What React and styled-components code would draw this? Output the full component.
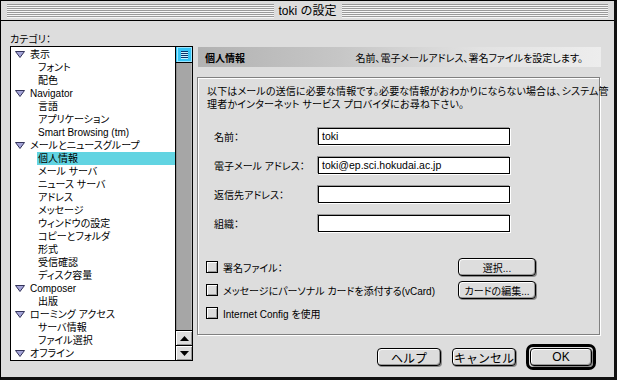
import React from "react";
import styled, { createGlobalStyle } from "styled-components";

const GlobalStyle = createGlobalStyle`
  html, body { margin: 0; padding: 0; background: #444; }
  body {
    font-family: "Liberation Sans", "Noto Sans CJK JP", sans-serif;
    font-size: 10px;
    font-feature-settings: "palt";
    color: #000;
  }
  * { box-sizing: border-box; }
`;

const Window = styled.div`
  width: 617px;
  height: 380px;
  background: #dddddd;
  border-top: 1px solid #000;
  border-left: 1px solid #000;
  border-right: 3px solid #111;
  border-bottom: 3px solid #111;
  display: flex;
  flex-direction: column;
  overflow: hidden;
`;

const TitleBar = styled.div`
  height: 20px;
  flex: none;
  border-bottom: 1px solid #000;
  display: flex;
  align-items: center;
  padding: 0 6px;
  background: #dcdcdc;
`;

const Stripes = styled.div`
  flex: 1;
  height: 14px;
  background: repeating-linear-gradient(to bottom, #9a9a9a 0 1px, #f6f6f6 1px 2px);
`;

const Title = styled.div`
  padding: 0 5px;
  font-size: 12px;
  line-height: 14px;
  font-feature-settings: normal;
`;

const Body = styled.div`
  display: flex;
  padding-left: 9px;
`;

const Side = styled.div`
  width: 183px;
  margin-top: 12px;
  display: flex;
  flex-direction: column;
`;

const SideLabel = styled.div`
  height: 13px;
  line-height: 13px;
`;

const List = styled.div`
  height: 315px;
  border: 1px solid #000;
  background: #fff;
  display: flex;
`;

const Rows = styled.div`
  flex: 1;
  padding-top: 1px;
  overflow: hidden;
`;

const Row = styled.div`
  height: 13px;
  display: flex;
  align-items: center;
  padding-left: ${(p) => (p.$child ? 26 : 4)}px;
  white-space: nowrap;
`;

const RowText = styled.span`
  flex: ${(p) => (p.$child ? 1 : "none")};
  height: 13px;
  line-height: 13px;
  padding-left: ${(p) => (p.$child ? 1 : 5)}px;
  background: ${(p) => (p.$selected ? "#62d4e2" : "transparent")};
`;

const ScrollBar = styled.div`
  width: 17px;
  border-left: 1px solid #000;
  display: flex;
  flex-direction: column;
`;

const Thumb = styled.div`
  height: 16px;
  border-bottom: 1px solid #000;
  background: #35c4f5;
  display: flex;
  align-items: center;
  justify-content: center;
`;

const Track = styled.div`
  flex: 1;
  background: #a6a6a6;
  box-shadow: inset 1px 0 #8c8c8c, inset -1px 0 #bdbdbd;
`;

const Arrow = styled.div`
  height: 15px;
  border-top: 1px solid #000;
  background: #dddddd;
  box-shadow: inset 1px 1px #fff, inset -1px -1px #999;
  display: flex;
  align-items: center;
  justify-content: center;
`;

const Main = styled.div`
  width: 404px;
  margin-left: 4px;
  margin-top: 26px;
  display: flex;
  flex-direction: column;
`;

const PanelHeader = styled.div`
  height: 20px;
  margin-left: 1px;
  display: flex;
  align-items: center;
  justify-content: space-between;
  padding: 0 18px 0 7px;
  background: linear-gradient(to right, #b2b2b2 0%, #c6c6c6 35%, #e2e2e2 70%, #ededed 100%);
`;

const HeaderTitle = styled.span`
  font-weight: bold;
`;

const Group = styled.div`
  margin-top: 10px;
  width: 403px;
  height: 258px;
  border: 1px solid #808080;
  box-shadow: inset 1px 1px #fff, 1px 1px #fff;
  padding: 7px 8px 0 8px;
  display: flex;
  flex-direction: column;
`;

const Intro = styled.p`
  margin: 0;
  padding-left: 1px;
  line-height: 13px;
  letter-spacing: 0.15px;
  white-space: nowrap;
`;

const Form = styled.div`
  margin: 17px 0 0 8px;
  display: grid;
  grid-template-columns: 104px 192px;
  grid-auto-rows: 17px;
  row-gap: 12px;
  align-items: center;
`;

const Field = styled.div`
  height: 17px;
  border: 1px solid #000;
  background: #fff;
  box-shadow: -1px -1px #9a9a9a, 1px 1px #fff;
  padding: 0 3px;
  line-height: 15px;
  font-size: 10.5px;
`;

const Checks = styled.div`
  margin-top: 26px;
  display: flex;
  flex-direction: column;
  gap: 5px;
`;

const CheckRow = styled.div`
  height: 18px;
  display: grid;
  grid-template-columns: 252px 78px;
  align-items: center;
`;

const CheckLabel = styled.label`
  display: flex;
  align-items: center;
  gap: 5px;
  white-space: nowrap;
`;

const Box = styled.span`
  width: 12px;
  height: 12px;
  border: 1px solid #000;
  background: #dcdcdc;
  box-shadow: inset 1px 1px #fff, inset -1px -1px #9a9a9a;
`;

const Button = styled.div`
  width: ${(p) => p.$w}px;
  height: 18px;
  border: 1px solid #000;
  border-radius: 4px;
  background: #dddddd;
  box-shadow: inset 1px 1px #fff, inset -1px -1px #999, 1px 1px #8a8a8a;
  display: flex;
  align-items: center;
  justify-content: center;
  font-size: ${(p) => (p.$big ? 12 : 10)}px;
  font-feature-settings: ${(p) => (p.$big ? "normal" : '"palt"')};
  white-space: nowrap;
`;

const Footer = styled.div`
  margin-top: 9px;
  display: flex;
  align-items: center;
  justify-content: flex-end;
  gap: 11px;
  padding-right: 5px;
`;

const DefaultRing = styled.div`
  margin-left: -1px;
  border: 3px solid #000;
  border-radius: 7px;
  padding: 1px;
`;

const Twisty = () => (
  <svg width="10" height="7" viewBox="0 0 10 7">
    <path d="M0.5 0.5 H9.5 L5 6.5 Z" fill="#a4a4d8" stroke="#33335a" strokeWidth="1" />
  </svg>
);

const Grip = () => (
  <svg width="15" height="15" viewBox="0 0 15 15">
    <rect x="0" y="0" width="15" height="15" fill="#35c4f5" />
    <rect x="0.5" y="0.5" width="14" height="14" fill="none" stroke="#9ee6ff" />
    {[4, 6, 8, 10].map((y) => (
      <g key={y}>
        <line x1="4" x2="11" y1={y + 0.5} y2={y + 0.5} stroke="#08356b" />
        <line x1="4" x2="11" y1={y + 1.5} y2={y + 1.5} stroke="#c8f2ff" />
      </g>
    ))}
  </svg>
);

const ArrowIcon = ({ up }) => (
  <svg width="9" height="5" viewBox="0 0 9 5">
    <path d={up ? "M0 5 H9 L4.5 0 Z" : "M0 0 H9 L4.5 5 Z"} fill="#000" />
  </svg>
);

const categories = [
  { t: "表示" },
  { t: "フォント", c: true },
  { t: "配色", c: true },
  { t: "Navigator" },
  { t: "言語", c: true },
  { t: "アプリケーション", c: true },
  { t: "Smart Browsing (tm)", c: true },
  { t: "メールとニュースグループ" },
  { t: "個人情報", c: true, sel: true },
  { t: "メール サーバ", c: true },
  { t: "ニュース サーバ", c: true },
  { t: "アドレス", c: true },
  { t: "メッセージ", c: true },
  { t: "ウィンドウの設定", c: true },
  { t: "コピーとフォルダ", c: true },
  { t: "形式", c: true },
  { t: "受信確認", c: true },
  { t: "ディスク容量", c: true },
  { t: "Composer" },
  { t: "出版", c: true },
  { t: "ローミング アクセス" },
  { t: "サーバ情報", c: true },
  { t: "ファイル選択", c: true },
  { t: "オフライン" },
];

const fields = [
  { label: "名前：", value: "toki" },
  { label: "電子メール アドレス：", value: "toki@ep.sci.hokudai.ac.jp" },
  { label: "返信先アドレス：", value: "" },
  { label: "組織：", value: "" },
];

export default function App() {
  return (
    <>
      <GlobalStyle />
      <Window>
        <TitleBar>
          <Stripes />
          <Title>toki の設定</Title>
          <Stripes />
        </TitleBar>
        <Body>
          <Side>
            <SideLabel>カテゴリ：</SideLabel>
            <List>
              <Rows>
                {categories.map((item) => (
                  <Row key={item.t} $child={item.c}>
                    {!item.c && <Twisty />}
                    <RowText $child={item.c} $selected={item.sel}>
                      {item.t}
                    </RowText>
                  </Row>
                ))}
              </Rows>
              <ScrollBar>
                <Thumb>
                  <Grip />
                </Thumb>
                <Track />
                <Arrow>
                  <ArrowIcon up />
                </Arrow>
                <Arrow>
                  <ArrowIcon />
                </Arrow>
              </ScrollBar>
            </List>
          </Side>
          <Main>
            <PanelHeader>
              <HeaderTitle>個人情報</HeaderTitle>
              <span>名前、電子メールアドレス、署名ファイルを設定します。</span>
            </PanelHeader>
            <Group>
              <Intro>
                以下はメールの送信に必要な情報です。必要な情報がおわかりにならない場合は、システム管
                <br />
                理者かインターネット サービス プロバイダにお尋ね下さい。
              </Intro>
              <Form>
                {fields.map((f) => (
                  <React.Fragment key={f.label}>
                    <span>{f.label}</span>
                    <Field>{f.value}</Field>
                  </React.Fragment>
                ))}
              </Form>
              <Checks>
                <CheckRow>
                  <CheckLabel>
                    <Box />
                    署名ファイル：
                  </CheckLabel>
                  <Button $w={78}>選択...</Button>
                </CheckRow>
                <CheckRow>
                  <CheckLabel>
                    <Box />
                    メッセージにパーソナル カードを添付する(vCard)
                  </CheckLabel>
                  <Button $w={78}>カードの編集...</Button>
                </CheckRow>
                <CheckRow>
                  <CheckLabel>
                    <Box />
                    Internet Config を使用
                  </CheckLabel>
                </CheckRow>
              </Checks>
            </Group>
            <Footer>
              <Button $w={64} $big>
                ヘルプ
              </Button>
              <Button $w={64} $big>
                キャンセル
              </Button>
              <DefaultRing>
                <Button $w={62} $big>
                  OK
                </Button>
              </DefaultRing>
            </Footer>
          </Main>
        </Body>
      </Window>
    </>
  );
}
